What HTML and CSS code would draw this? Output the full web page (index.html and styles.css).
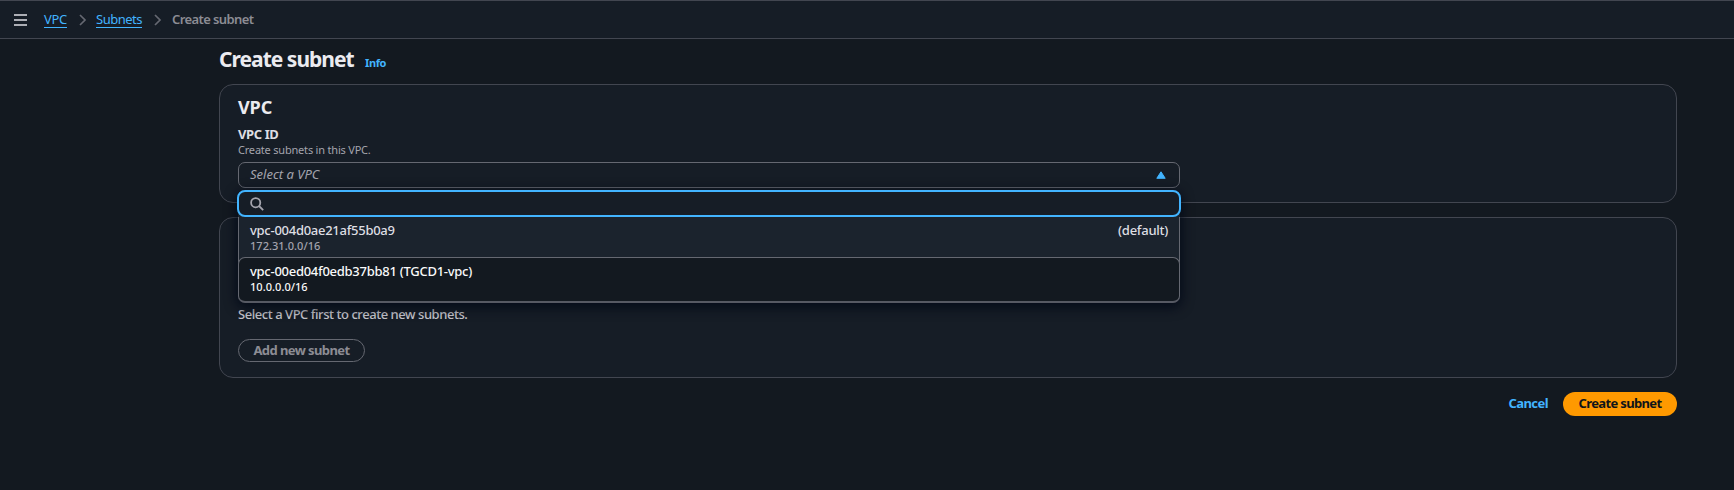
FILE: index.html
```html
<!DOCTYPE html>
<html lang="en">
<head>
<meta charset="utf-8">
<title>Create subnet</title>
<link rel="stylesheet" href="styles.css">
</head>
<body>
<header class="topbar">
  <svg class="menu-icon" width="13" height="12" viewBox="0 0 13 12"><path d="M0 1h13M0 6h13M0 11h13"/></svg>
  <nav class="crumbs">
    <a class="crumb crumb-vpc">VPC</a>
    <svg class="chevron" width="8" height="12" viewBox="0 0 8 12"><path d="M1 1l5 5-5 5"/></svg>
    <a class="crumb crumb-subnets">Subnets</a>
    <svg class="chevron" width="8" height="12" viewBox="0 0 8 12"><path d="M1 1l5 5-5 5"/></svg>
    <span class="crumb-current">Create subnet</span>
  </nav>
</header>
<main class="content">
  <div class="heading">
    <h1 class="title">Create subnet</h1>
    <a class="info">Info</a>
  </div>
  <section class="panel vpc-panel">
    <h2 class="panel-title">VPC</h2>
    <label class="label">VPC ID</label>
    <p class="hint">Create subnets in this VPC.</p>
    <div class="select">
      <div class="trigger">
        <span class="placeholder">Select a VPC</span>
        <svg class="caret" width="10" height="8" viewBox="0 0 10 8"><path d="M5 .8L9.2 7.3H.8z"/></svg>
      </div>
      <div class="dropdown">
        <div class="search">
          <svg class="search-icon" width="14" height="14" viewBox="0 0 14 14"><circle cx="5.7" cy="5.7" r="4.6"/><path d="M9 9l4.2 4.2"/></svg>
        </div>
        <div class="option option-first">
          <div class="option-row"><span>vpc-004d0ae21af55b0a9</span><span>(default)</span></div>
          <div class="option-cidr">172.31.0.0/16</div>
        </div>
        <div class="option option-active">
          <div class="option-row"><span>vpc-00ed04f0edb37bb81 (TGCD1-vpc)</span></div>
          <div class="option-cidr">10.0.0.0/16</div>
        </div>
      </div>
    </div>
  </section>
  <section class="panel subnet-panel">
    <p class="empty">Select a VPC first to create new subnets.</p>
    <button class="btn add">Add new subnet</button>
  </section>
  <footer class="actions">
    <a class="cancel">Cancel</a>
    <button class="btn primary">Create subnet</button>
  </footer>
</main>
</body>
</html>
```
FILE: styles.css
```css
* { box-sizing: border-box; }
body { margin: 0; min-height: 490px; background: #131920; color: #c6c6cd; font: 500 13px/18px "Noto Sans", "Open Sans", sans-serif; white-space: nowrap; }
h1, h2, p { margin: 0; }
svg { display: block; flex: none; fill: none; }
.topbar { height: 39px; display: flex; align-items: center; padding-left: 14px; background: #161d26; border: solid #424650; border-width: 1px 0; }
.menu-icon { stroke: #dedee3; stroke-width: 1.6; }
.crumbs { display: flex; align-items: center; margin-left: 17px; }
.crumb { color: #42b4ff; font-weight: 400; line-height: 16px; border-bottom: 1px solid #42b4ff; }
.crumb-vpc { width: 23px; letter-spacing: -.3px; }
.crumb-subnets { width: 46px; letter-spacing: -.5px; }
.chevron { margin: 0 10px 0 12px; stroke: #656871; stroke-width: 1.7; }
.chevron + .crumb-subnets { margin-left: -1px; }
.crumb-current { color: #8c8c94; font-weight: 600; letter-spacing: -.6px; padding-bottom: 2px; }
.content { width: 1458px; margin-left: 219px; }
.heading { height: 45px; padding-top: 5px; display: flex; align-items: baseline; gap: 12px; }
.title { width: 134px; font-size: 21px; line-height: 30px; font-weight: 700; letter-spacing: -.98px; color: #ebebf0; }
.info { font-size: 11px; font-weight: 700; letter-spacing: -.4px; color: #42b4ff; }
.panel { border: 1px solid #424650; border-radius: 14px; background: #161d26; padding: 0 18px; }
.vpc-panel { height: 119px; padding-top: 11px; }
.panel-title { font-size: 18px; line-height: 22px; font-weight: 700; letter-spacing: -.1px; color: #ebebf0; }
.label { display: block; margin-top: 7px; line-height: 18px; font-weight: 700; letter-spacing: -.4px; color: #dedee3; }
.hint { font-size: 11px; font-weight: 400; line-height: 14px; letter-spacing: -.2px; color: #a4a4ad; margin-bottom: 5px; }
.select { position: relative; width: 942px; }
.trigger { height: 26px; border: 1px solid #656871; border-radius: 7px; display: flex; align-items: center; justify-content: space-between; padding: 0 13px 0 11px; }
.placeholder { font-style: italic; font-weight: 400; color: #a4a4ad; padding-bottom: 2px; }
.caret { fill: #42b4ff; stroke: #42b4ff; stroke-linejoin: round; }
.dropdown { position: absolute; left: 0; top: 28px; width: 942px; z-index: 1; border-radius: 8px; background: #1b232d; box-shadow: 0 3px 12px 2px rgba(0, 7, 22, .8); }
.search { height: 27px; margin: 0 -1px; border: 2px solid #42b4ff; border-radius: 8px; background: #161d26; display: flex; align-items: center; padding-left: 11px; }
.search-icon { stroke: #a4a4ad; stroke-width: 1.8; }
.option { padding: 4px 11px 0; }
.option-first { height: 48px; border: solid #656871; border-width: 0 1px; }
.option-active { height: 46px; margin-top: -8px; border: 1px solid #656871; border-bottom: 2px solid #565963; border-radius: 7px; background: #131920; }
.option-row { display: flex; justify-content: space-between; line-height: 18px; letter-spacing: -.27px; color: #dedee3; }
.option-cidr { font-size: 11px; line-height: 14px; letter-spacing: .04px; color: #a4a4ad; }
.option-active .option-row, .option-active .option-cidr { color: #f9f9fa; }
.subnet-panel { height: 161px; margin-top: 14px; padding-top: 87px; }
.empty { letter-spacing: -.45px; }
.btn { display: flex; align-items: center; justify-content: center; padding: 0 0 1px; font: 700 13px/18px "Noto Sans", "Open Sans", sans-serif; border-radius: 12px; }
.add { width: 127px; height: 23px; margin-top: 16px; border: 1px solid #656871; background: none; color: #8c8c94; letter-spacing: -.58px; }
.actions { display: flex; justify-content: flex-end; align-items: center; margin-top: 14px; gap: 15px; }
.cancel { font-weight: 700; letter-spacing: -.57px; padding-bottom: 2px; color: #42b4ff; }
.primary { width: 114px; height: 24px; padding-bottom: 2px; border: 0; background: #ff9900; color: #0f141a; letter-spacing: -.64px; }
```
